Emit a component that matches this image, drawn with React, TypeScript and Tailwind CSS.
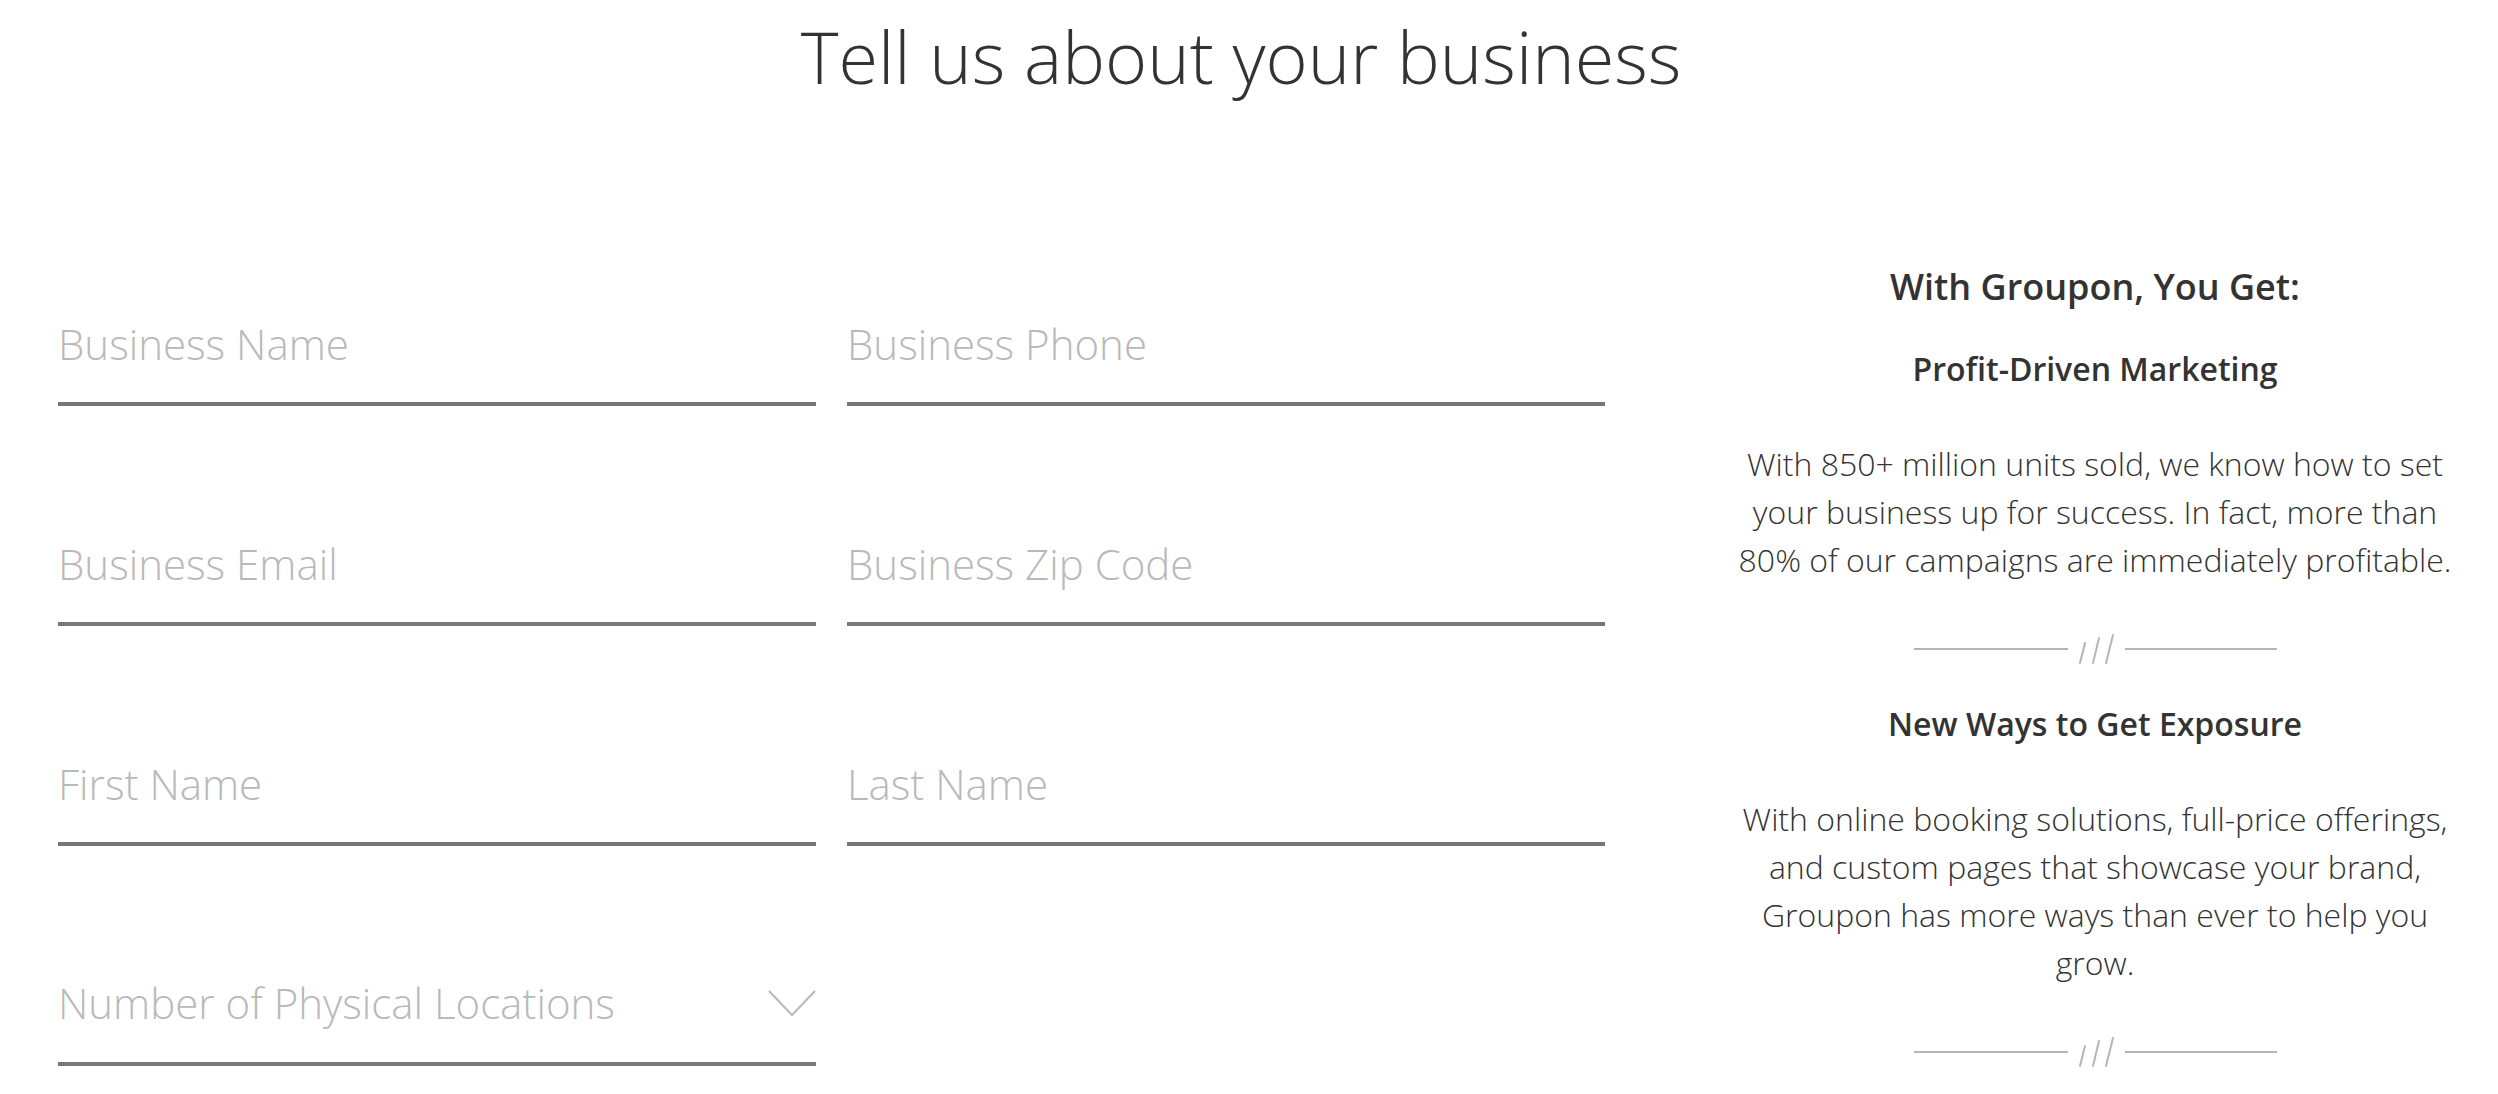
import React from 'react';

const fields = [
    'Business Name',
    'Business Phone',
    'Business Email',
    'Business Zip Code',
    'First Name',
    'Last Name',
];

function Field({ label }: { label: string }) {
    return (
        <div className="border-b-4 border-[#75787b] pb-[29px]">
            <input
                type="text"
                placeholder={label}
                className="block w-full h-[60px] bg-transparent outline-none font-['Open_Sans',sans-serif] font-light text-[42px] text-[#333] placeholder:text-[#b9b9b9]"
            />
        </div>
    );
}

function Divider() {
    return (
        <div className="flex items-center justify-center h-[30px] mt-[50px]">
            <div className="w-[154px] h-[2px] bg-[#b5b5b5]" />
            <svg className="mx-[11px]" width="35" height="30" viewBox="0 0 35 30" fill="none" stroke="#b5b5b5" strokeWidth="2" strokeLinecap="round">
                <line x1="1" y1="29" x2="6" y2="9" />
                <line x1="14" y1="29" x2="20" y2="4" />
                <line x1="27" y1="29" x2="34" y2="1" />
            </svg>
            <div className="w-[152px] h-[2px] bg-[#b5b5b5]" />
        </div>
    );
}

export default function App() {
    return (
        <div className="w-full min-h-screen bg-white text-[#333] font-['Open_Sans',sans-serif]">
            <h1 className="pt-[16px] pr-[16px] text-center text-[72px] leading-[80px] font-light">
                Tell us about your business
            </h1>

            <div className="flex items-start pl-[58px]">
                <form className="w-[1547px] mt-[217px] grid grid-cols-2 gap-x-[31px] gap-y-[127px]">
                    {fields.map((f) => (
                        <Field key={f} label={f} />
                    ))}
                    <div className="border-b-4 border-[#75787b] pb-[29px]">
                        <div className="flex items-center justify-between h-[60px] cursor-pointer">
                            <span className="font-light text-[42px] leading-[60px] text-[#b9b9b9]">Number of Physical Locations</span>
                            <svg width="48" height="27" viewBox="0 0 48 27" fill="none" stroke="#b9b9b9" strokeWidth="2">
                                <polyline points="1,1 24,25 47,1" />
                            </svg>
                        </div>
                    </div>
                </form>

                <aside className="ml-[110px] w-[760px] px-[15px] mt-[167px] text-center">
                    <h3 className="text-[36px] leading-[48px] font-semibold">With Groupon, You Get:</h3>

                    <h4 className="mt-[38px] text-[32px] leading-[40px] font-semibold">Profit-Driven Marketing</h4>
                    <p className="mt-[51px] text-[32px] leading-[48px] font-light">
                        With 850+ million units sold, we know how to set your business up for success. In fact, more than 80% of our campaigns are immediately profitable.
                    </p>
                    <Divider />

                    <h4 className="mt-[40px] text-[32px] leading-[40px] font-semibold">New Ways to Get Exposure</h4>
                    <p className="mt-[51px] text-[32px] leading-[48px] font-light">
                        With online booking solutions, full-price offerings, and custom pages that showcase your brand, Groupon has more ways than ever to help you grow.
                    </p>
                    <Divider />
                </aside>
            </div>
        </div>
    );
}
